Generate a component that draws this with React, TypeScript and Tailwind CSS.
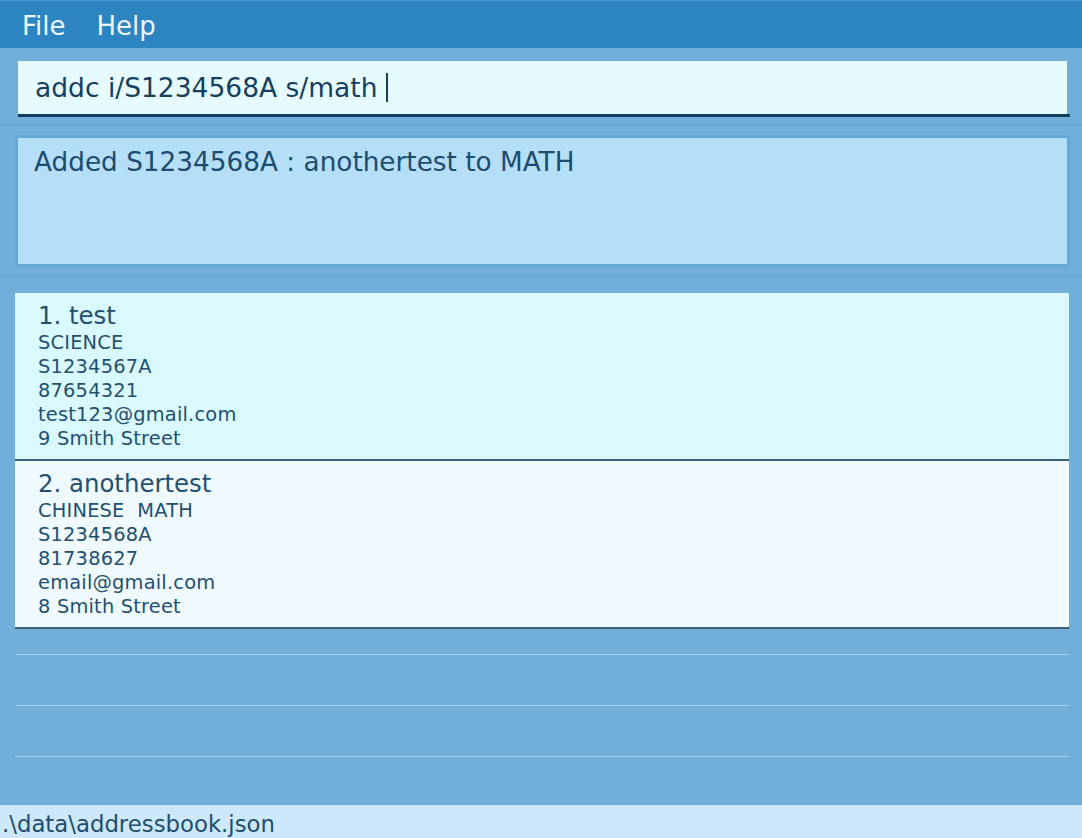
import React from "react";

const persons = [
  {
    name: "test",
    subjects: "SCIENCE",
    nric: "S1234567A",
    phone: "87654321",
    email: "test123@gmail.com",
    address: "9 Smith Street",
    bg: "bg-[#d9f9ff]",
  },
  {
    name: "anothertest",
    subjects: "CHINESE\u00a0 MATH",
    nric: "S1234568A",
    phone: "81738627",
    email: "email@gmail.com",
    address: "8 Smith Street",
    bg: "bg-[#effaff]",
  },
];

export default function App() {
  return (
    <div className="flex h-[838px] w-full flex-col overflow-hidden bg-[#71afda] font-['DejaVu_Sans',sans-serif]">
      {/* Menu bar */}
      <div className="flex h-[48px] shrink-0 items-center border-t border-[#4a98cc] bg-[#2c85c1] pl-[22px] pt-[4px] text-[26px] text-[#eef5fb]">
        <span>File</span>
        <span className="ml-[31px]">Help</span>
      </div>

      {/* Command box */}
      <div className="ml-[18px] mr-[12px] mt-[13px]">
        <div className="mr-[3px] flex h-[53px] items-center bg-[#e6fbff] pl-[17px] text-[26.5px] text-[#163f5e]">
          <span>addc i/S1234568A s/math</span>
          <span className="ml-[8px] h-[29px] w-[2px] bg-[#163f5e]" />
        </div>
        <div className="h-[3px] bg-[#133f5e]" />
      </div>
      <div className="mt-[7px] h-[2px] bg-[#68a8d5]" />

      {/* Result display */}
      <div className="ml-[15px] mr-[12px] mt-[9px] h-[132px] border-[3px] border-[#67a9d6] bg-[#b5dff7] pl-[16px] pt-[8px] text-[26.3px] leading-[32px] text-[#1c4c70]">
        Added S1234568A : anothertest to MATH
      </div>
      <div className="mt-[8px] h-[2px] bg-[#68a8d5]" />

      {/* Person list */}
      <div className="ml-[15px] mr-[13px] mt-[16px] flex-1">
        {persons.map((p, i) => (
          <div
            key={p.nric}
            className={`h-[168px] border-b-2 border-[#3b607c] pl-[23px] pt-[10px] text-[#24506f] ${p.bg}`}
          >
            <div className="text-[24.4px] leading-[26px]">
              {i + 1}. {p.name}
            </div>
            <div className="mt-[2px] text-[19.4px] leading-[24px] tracking-[0.2px]">
              <div>{p.subjects}</div>
              <div>{p.nric}</div>
              <div>{p.phone}</div>
              <div>{p.email}</div>
              <div>{p.address}</div>
            </div>
          </div>
        ))}
        <div className="mt-[25px] h-[1px] bg-[#a6d1ee]" />
        <div className="mt-[50px] h-[1px] bg-[#a6d1ee]" />
        <div className="mt-[50px] h-[1px] bg-[#a6d1ee]" />
      </div>

      {/* Status bar */}
      <div className="flex h-[33px] shrink-0 items-end bg-[#cde8fa] pl-[2px] text-[22.8px] leading-[28px] text-[#1f4d6d]">
        .\data\addressbook.json
      </div>
    </div>
  );
}
